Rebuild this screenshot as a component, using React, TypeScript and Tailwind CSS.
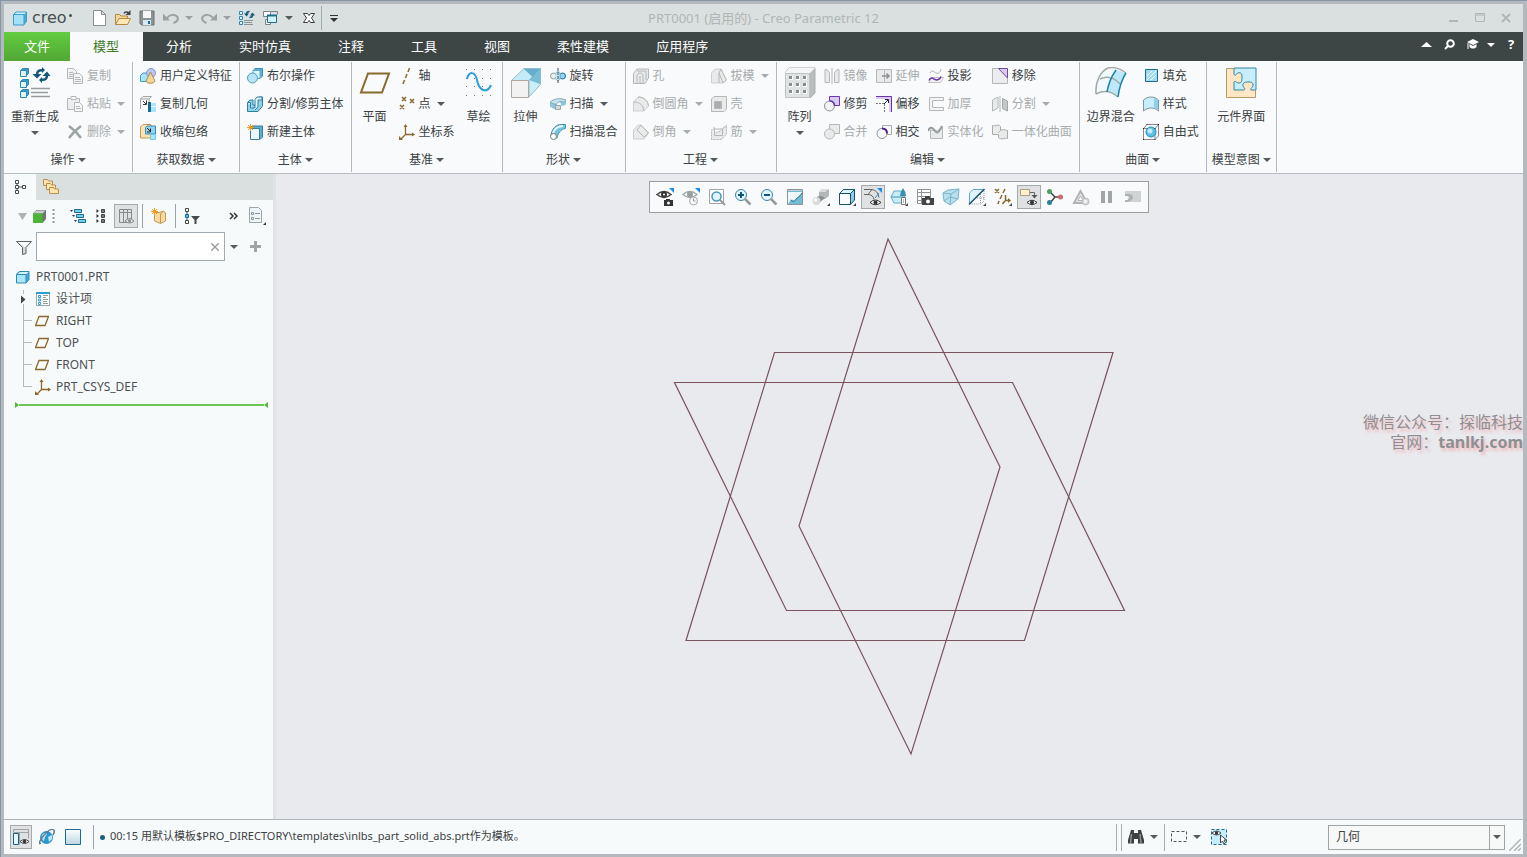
import { ReactNode, useState } from 'react'

type IconProps = { size?: number; className?: string }
type Icon = (props: IconProps) => ReactNode

const icon = (box: number, children: ReactNode): Icon => {
  const Drawn: Icon = ({ size = box, className = '' }) => (
    <svg
      width={size}
      height={size}
      viewBox={`0 0 ${box} ${box}`}
      fill="none"
      aria-hidden="true"
      className={`shrink-0 ${className}`}
    >
      {children}
    </svg>
  )
  return Drawn
}

const Arrow = ({ className = 'text-[#555b5b]' }: { className?: string }) => (
  <svg width="8" height="4" viewBox="0 0 8 4" aria-hidden="true" className={`shrink-0 ${className}`}>
    <path d="M0 0h8L4 4z" fill="currentColor" />
  </svg>
)

const teal = '#1c6c8e'
const sky = '#a8e4fb'
const brown = '#8a6a2c'
const gray = '#b4b8b8'
const pale = '#e9ebeb'
const violet = '#6a35a8'

/* Title bar */
const CubeLogo = icon(16, <>
  <path d="M1.500 4.500 4 2h10.500v9.500l-2.500 3" fill="#4aa8d8" stroke="#3a9cc8" />
  <path d="M2 4.500 4.500 2.500h9.500L12 4.500z" fill="#d4f2fd" />
  <path d="M1.500 4.500h10.500v10.500H1.500z" fill="#a4e0f9" stroke="#3a9cc8" />
</>)
const NewFile = icon(16, <path d="M2.500.500h8l4 4v11h-12zM10.500.500v4h4" fill="#fff" stroke="#8a9090" />)
const OpenFolder = icon(16, <>
  <path d="M.500 14.500V4.500h4l1.500 1.500h6.500v3" fill="#f2d79a" stroke="#b48a3c" />
  <path d="M.500 14.500 4 8.500h11.500l-3 6z" fill="#fde7b4" stroke="#b48a3c" />
  <path d="M9 3.500c1-2 3-2 5-.5" stroke="#444" strokeWidth="1.500" />
  <path d="M15.500 0v5h-5z" fill="#444" />
</>)
const Save = icon(16, <>
  <path d="M1 1h14v14H2.500L1 13.500z" fill="#8b9292" stroke="#6a7272" />
  <path d="M4 1h8v7H4z" fill="#f7f7f7" />
  <path d="M4 10h8v5H4z" fill="#d6e9f2" />
  <path d="M9 11h2v3H9z" fill={teal} />
</>)
const Undo = icon(16, <>
  <path d="M4 8c3-4 8-4 10.500-1 1 3-1 5-4 6" stroke="#9ba2a2" strokeWidth="2" />
  <path d="M0 3.500v7h7z" fill="#9ba2a2" />
</>)
const Redo = icon(16, <>
  <path d="M12 8C9 4 4 4 1.500 7c-1 3 1 5 4 6" stroke="#9ba2a2" strokeWidth="2" />
  <path d="M16 3.500v7H9z" fill="#9ba2a2" />
</>)
const RegenSmall = icon(16, <>
  <path d="M.500 1.500h3v3h-3zM.500 6.500h3v3h-3zM.500 11.500h3v3h-3z" fill="#dff5fe" stroke="#2d89b1" />
  <path d="M5 10.500h9M5 12.500h8M5 14.500h9" stroke="#8b9292" />
  <path d="M10.500 1.500c-2 0-3 1-3 2.500M10.500 7.500c2 0 3-1 3-2.500" stroke="#12577a" strokeWidth="1.500" />
  <path d="M5 3.500h5L7.500 6.500zM11 5.500h5L13.500 2.500z" fill="#12577a" />
</>)
const Windows = icon(16, <>
  <path d="M.500 1.500h7v5h-7zM2.500 9.500h5v5h-5z" fill="#fff" stroke="#7b8383" />
  <path d="M8 1.500h6.500v3" stroke="#7b8383" />
  <path d="M4.500 5.500h9v7h-9z" fill="#d5f1fc" stroke={teal} />
  <path d="M4 5.500h10" stroke={teal} strokeWidth="2" />
</>)
const CloseX = icon(16, <path
  d="M2.500 3.500h4L8 5.500l1.500-2h4L10.500 8l3 4.500h-4L8 10.500l-1.500 2h-4l3-4.500z"
  fill="#fff"
  stroke="#3a4040"
/>)

/* Ribbon, 32px */
const Regenerate = icon(32, <>
  {[1, 12, 22].map((y) => (
    <g key={y}>
      <path d={`M1.500 ${y + 2.5}l2-2h6v5l-2 2z`} fill="#3f9cc6" stroke="#2d89b1" />
      <path d={`M1.500 ${y + 2.5}h6v6h-6z`} fill="#dff5fe" stroke="#2d89b1" />
    </g>
  ))}
  <path d="M12 21.500h19M12 25.500h17M12 29.500h19" stroke="#979d9d" strokeWidth="1.500" />
  <path d="M24 3.500c-4-1-6 1-6 4M22 12.500c4 1 6-1 6-4" stroke="#12577a" strokeWidth="2.500" />
  <path d="M13.500 7h9L18 11.500zM23.500 9h8L28 4.500zM23 0v6l3-3zM23 10v6l-3-3z" fill="#12577a" />
</>)
const Plane = icon(32, <path d="M9 6.500h21l-7 19H2z" stroke={brown} strokeWidth="2" />)
const Sketch = icon(32, <>
  {[2, 11, 19, 28].map((y) => (
    <path key={y} d={`M3 ${y}.5h1M11 ${y}.5h1M19 ${y}.5h1M27 ${y}.5h1`} stroke="#777" />
  ))}
  <path d="M4 12c2-8 8-8 10 1 2 11 10 14 14 5" stroke="#2a9fd8" strokeWidth="2" />
</>)
const Extrude = icon(32, <>
  <path d="M1.500 13.500 14 1.500h16.500L19 13.500z" fill="#c6ebf8" stroke="#8fbccb" />
  <path d="m19 13.500 11.500-12v16L19 30z" fill="#c9effb" stroke="#8fbccb" />
  <path d="M14 2h16v15z" fill="#62aecb" />
  <path d="M19 13 30 2v15z" fill="#78bcd5" />
  <path d="M1.500 13.500h17v17h-17z" fill="#f2f2f2" stroke="#b0a8a0" />
</>)
const Pattern = icon(32, <>
  <path d="M1 6 5 1h26v25l-5 5" fill="#b9bdbd" stroke="#a9adad" />
  <path d="M1 6 5 1h26l-5 5z" fill="#f5f5f5" />
  <path d="M1.500 6.500h24v24h-24z" fill="#dfe2e2" stroke="#c0c4c4" />
  {[9, 16, 23].map((y) => [5, 12, 19].map((x) => (
    <g key={`${x}-${y}`}>
      <path d={`M${x} ${y}h4v4H${x}z`} fill="#fff" />
      <path d={`M${x} ${y}h3v3H${x}z`} fill="#868c8c" />
    </g>
  )))}
</>)
const Boundary = icon(32, <>
  <path d="M1 27C0 14 6 4 13 1q9-2 18 5Q25 15 23 30q-9-9-22-3z" fill="#f2f9fc" />
  <path d="M16 10c5 2 6 3 9 7l-2 13-11-6zM21 3l10 3-6 11-9-7z" fill="#bde9f8" />
  <path d="M1 27C0 14 6 4 13 1q9-2 18 5M1 27q12-6 22 3M5 12q11-5 20 5" stroke="#a3a9a9" strokeWidth="1.500" />
  <path d="M31 6Q25 15 23 30M21 3Q14 13 12 25" stroke="#1c81ab" strokeWidth="1.500" />
</>)
const Puzzle = icon(32, <>
  <path d="M1 1h30v30H1z" fill="#ffe7c4" />
  <path d="M9 1h22v22h-5c-2-1 2-2 2-5s-2-3-5-3-6 1-5 4c1 2 3 3 1 4H9V15c1-2 2 1 5 1s3-3 3-6-1-5-4-4c-2 1-3 4-4 1z" fill="#c6eefd" stroke="#3184a6" />
  <path d="M9 1.500H1.500v29h29V23" stroke="#b59a66" />
</>)

/* Ribbon, 16px */
const Copy = icon(16, <>
  <path d="M.500.500h6l3 3v7h-9z" fill="#f3f4f4" stroke={gray} />
  <path d="M2 4.500h4M2 6.500h4M2 8.500h4" stroke={gray} />
  <path d="M6.500 5.500h6l3 3v7h-9z" fill="#f3f4f4" stroke={gray} />
  <path d="M8 9.500h5M8 11.500h6M8 13.500h6" stroke={gray} />
</>)
const Paste = icon(16, <>
  <path d="M.500 2.500h12v11H.500z" fill="#eceeee" stroke={gray} />
  <path d="M4 .500h5v3H4z" fill="#fff" stroke={gray} />
  <path d="M7.500 6.500h5l3 3v6h-8z" fill="#f7f8f8" stroke={gray} />
  <path d="M9 10.500h4M9 12.500h5" stroke={gray} />
</>)
const Delete = icon(16, <path d="M2 2q7 5 12 12M14 2Q7 7 2 14" stroke="#9da2a2" strokeWidth="2.500" />)
const UserFeature = icon(16, <>
  <path d="M.500 7.500 3 5h7v8.500H.500z" fill={sky} stroke="#3a9cc8" />
  <circle cx="11" cy="5" r="4.500" fill="#bcc7ee" stroke="#8494d0" />
  <path d="m10.500 4 4.500 9c-1 3-8 3-9 0z" fill="#f5d79e" stroke="#b08a46" />
</>)
const CopyGeom = icon(16, <>
  <path d="M.500 13V3L3 .500h8.500L9 3H.500M9 3v3" fill="#f0f1f1" stroke="#a2a7a7" />
  <path d="m3 5 3 3M6.500 4.500V8.500H3" stroke="#333" />
  <path d="M8 6h3v10H8z" fill={teal} />
  <path d="M11 7h5v3h-5zM11 11h5v5h-5z" fill={sky} />
</>)
const Shrinkwrap = icon(16, <>
  <path d="M.500 3 3 .500h8V14H.500z" fill="#fbe3b4" stroke="#c09a52" />
  <path d="M5.500 3.500 7 2h8.500v8H5.500z" fill="#8fd5f2" stroke="#3a8cb0" />
  <path d="m7 4 3.500 3.500M10.500 4.500V8H7" stroke="#222" />
  <path d="M10.500 10.500h5v5h-5z" fill={sky} stroke="#7ac4e0" />
</>)
const BooleanOp = icon(16, <>
  <path d="M6 2.500 8 .500h7.500V8l-2.500 2.500" fill="#60b0d2" stroke="#3a8cb0" />
  <path d="M6 2.500h7v8H6z" fill="#def5fd" stroke="#5aaed0" />
  <circle cx="5.500" cy="10" r="5" fill="#b9e4f4" stroke="#4c9dbd" />
</>)
const SplitBody = icon(16, <>
  <path d="M.500 6.500 3 4h3v5h4V4l2-3h3.500v9L11 15.500H.500z" fill="#8fd1ea" stroke="#2f7f9f" />
  <path d="M.500 6.500h3V12H8V3.500L10 1h5v3h-4v7l-3 3" stroke="#2f7f9f" fill="#e1f5fc" />
</>)
const NewBody = icon(16, <>
  <path d="M3.500 4 5.500 2h10v11L13 15.500" fill="#5aaed2" stroke="#3a7f9c" />
  <path d="M3.500 4.500h9v11h-9z" fill="#eaf8fd" stroke="#3a7f9c" />
  <circle cx="3.500" cy="3.500" r="1.500" fill="#f29a1c" />
  <path d="M3.500 0v7M0 3.500h7M1 1l5 5M6 1 1 6" stroke="#f29a1c" />
</>)
const Axis = icon(16, <path d="M10.500 0 9 4M8 6 6.500 10M5.500 12 4 16" stroke={brown} strokeWidth="1.500" />)
const Point = icon(16, <path d="M3 1l4 4M7 1 3 5M11 3l4 4M15 3l-4 4M1 9l4 4M5 9l-4 4" stroke={brown} strokeWidth="1.500" />)
const Csys = icon(16, <>
  <path d="M6.500 2v8.500h8M6.500 10.500l-5 5" stroke={brown} strokeWidth="1.300" />
  <path d="M6.500 0l-2 3h4zM16 10.500l-3-2v4zM0 16v-4l4 4z" fill={brown} />
</>)
const Revolve = icon(16, <>
  <circle cx="3.500" cy="8" r="3" fill="#e3eef2" stroke="#8f9da2" />
  <circle cx="12.500" cy="8" r="3" fill="#8fd5f2" stroke={teal} />
  <path d="M6 5c1-2 3-2 4 0v6c-1 2-3 2-4 0" fill="#bfe6f4" stroke="#7cb8cf" />
  <path d="M8 0v16" stroke="#445" strokeDasharray="3 1" />
</>)
const Sweep = icon(16, <>
  <path d="M0 6.500C4 2 11 2 16 4v4.500C14 10 12 10 11 9.500V8c0-2-3-2-4-1v6H4l-4-2.500z" fill="#86c8de" />
  <path d="M0 6.500C4 2 11 2 16 4l-2 2c-3-1-6-1-8 2.500z" fill="#c3e4ee" stroke="#8aa7b1" />
  <path d="M5.500 9.500h5v4h-5z" fill="#d3d9db" stroke="#9ba6aa" />
</>)
const SweptBlend = icon(16, <>
  <path d="M1 12C1 5 7 0 11 .500h4.500v4C11 5 8 9 7 14z" fill="#78c3e0" stroke="#3f92b2" />
  <path d="M3 9C5 4 9 2 13 2" stroke="#e8f9ff" strokeWidth="2" />
  <circle cx="3.500" cy="12.500" r="3" fill="#fff" stroke="#777" />
</>)
const Hole = icon(16, <>
  <path d="M.500 5.500 4 1h11.500v9L12 15.500H.500z" fill={pale} stroke={gray} />
  <path d="M4 15V8c0-4 6-4 6 0v7M7 15V8M4 3h9v9" stroke={gray} />
</>)
const Round = icon(16, <>
  <path d="M.500 6 5 1c6 0 10 4 10.500 9L11 15H.500z" fill={pale} stroke="#cdd0d0" />
  <path d="M.500 6c6 0 10 3 10.500 9M5 1c6 0 10 4 10.500 9" stroke={gray} />
</>)
const Chamfer = icon(16, <>
  <path d="M.500 6 5 1h3l7.500 8L11 15H.500z" fill={pale} stroke="#cdd0d0" />
  <path d="M4 6l7 7M4 6l4-5M11 13l4.500-4M8 1l7.500 8" stroke={gray} />
</>)
const Draft = icon(16, <>
  <path d="M.500 5 4 1h6l5 11-3 3H.500z" fill={pale} stroke="#cdd0d0" />
  <path d="M8 5l4 10 3.500-3L10 1 8 5v10" stroke={gray} />
</>)
const Shell = icon(16, <>
  <path d="M.500 3 3 .500h12.500V13L13 15.500H.500z" fill={pale} stroke={gray} />
  <path d="M3.500 5.500h7v7h-7z" fill="#a9adad" stroke={gray} />
</>)
const Rib = icon(16, <>
  <path d="M.500 15.500V6l3-3v6l6-2 6-6v9l-5 5.500z" fill={pale} stroke={gray} strokeDasharray="2 1" />
  <path d="M3.500 11.500h8V5M3.500 11.500V5h8l3-3" stroke={gray} />
</>)
const Mirror = icon(16, <>
  <path d="M1 1.500c3 0 4 2 4.500 4v9H1zM15 1.500c-3 0-4 2-4.500 4v9H15z" fill={pale} stroke={gray} />
  <path d="M8 0v16" stroke={gray} />
</>)
const Trim = icon(16, <>
  <path d="M5.500.500h10v9h-10z" fill="#d8caf4" stroke={violet} />
  <circle cx="5.500" cy="10" r="5" fill="#f2f2f4" stroke="#8d9191" />
  <path d="M5.500 5c3 0 5 2 5 5" stroke={violet} strokeWidth="1.500" />
</>)
const Merge = icon(16, <>
  <path d="M5.500.500h10v9h-10z" fill={pale} stroke={gray} />
  <circle cx="5.500" cy="10" r="5" fill={pale} stroke={gray} />
</>)
const Extend = icon(16, <>
  <path d="M.500 1.500h8v13h-8zM8.500 1.500h7v13h-7z" fill={pale} stroke={gray} />
  <path d="M6 8h7M10.500 5.500 13 8l-2.500 2.500" stroke="#8b9090" strokeWidth="1.500" />
</>)
const Offset = icon(16, <>
  <path d="M0 1.500h14.500V16" stroke="#d8caf4" strokeWidth="3" />
  <path d="M0 .500h15.500V16" stroke={violet} />
  <path d="M0 7.500h8.500V16" stroke="#777" strokeDasharray="2 1" />
  <path d="m8 8 4-4M9 3.500h3.500V7" stroke="#222" />
</>)
const Intersect = icon(16, <>
  <path d="M11 10.500h4.500v-9h-9V4" stroke="#aab" />
  <circle cx="6" cy="9.500" r="5" stroke="#8d9191" />
  <path d="M6 4.500c3 0 5 2 5 5" stroke="#4c2385" strokeWidth="2" />
</>)
const Project = icon(16, <>
  <path d="M2 5c2-4 4-1 6 0s4 0 5-4" stroke="#a9adad" />
  <path d="M4 9.500h11.500l-3 5H.500z" fill="#f3f3f3" stroke="#c0c0c5" />
  <path d="M1 12.500c2-4 4-2 6-1s5 0 6-3" stroke={violet} strokeWidth="1.500" />
</>)
const Thicken = icon(16, <path d="M1.500 1.500h14v3h-11v7h11v3h-14z" fill="#f4f5f5" stroke={gray} />)
const Solidify = icon(16, <>
  <path d="M2.500 6v8.500h12V3L9 7z" fill={pale} stroke={gray} />
  <path d="M0 7c3-7 6-1 8 1s4-2 6-6" stroke="#999e9e" strokeWidth="2" />
</>)
const Remove = icon(16, <>
  <path d="M.500.500h15v15H.500z" fill="#ececee" stroke="#b2b6b6" />
  <path d="M6.500.500h9V10z" fill="#d8caf4" stroke="#6b4aa0" />
</>)
const Split = icon(16, <>
  <path d="M.500 4 6 1v11l-5.500 3z" fill={pale} stroke={gray} />
  <path d="M8 0v16" stroke={gray} />
  <path d="M10.500 2.500 15.500 5v10l-5-2.500z" fill="#c4c8c8" stroke="#a0a5a5" />
</>)
const Quilt = icon(16, <>
  <path d="M.500 10.500v-9c3 1 6-2 8 1v4c3-2 5 0 7 0v8c-3-1-6 2-9-1v-3z" fill={pale} stroke="#a7abab" />
  <path d="M8.500 6.500 6 9" stroke={gray} />
</>)
const Fill = icon(16, <>
  <path d="M2.500 1.500h12v12h-12z" fill="#9edcf2" stroke={teal} />
  <path d="m4 8 5-5M4 12l9-9M8 12l5-5" stroke="#fff" />
</>)
const Style = icon(16, <>
  <path d="M.500 15V4c4-4 11-4 15 0v11c-4-4-11-4-15 0z" fill="#c8eefb" stroke="#7f979f" />
  <path d="M11 2c3 1 4 2 4 3v9l-4-2z" fill="#8fd0e8" />
</>)
const Freestyle = icon(16, <>
  <path d="M.500 4.500 4 .500h11.500V12L12 15.500H.500zM.500 4.500H12v11M12 4.500l3.500-4" stroke="#888" />
  <circle cx="8" cy="8" r="5" fill="#5cc0e6" stroke="#2b8db4" />
  <circle cx="7" cy="7" r="2.500" fill="#c4edfb" />
  <path d="M0 4h1v1H0zM11.500 4h1v1h-1zM3.500 0h1v1h-1zM15 0h1v1h-1zM0 15h1v1H0zM11.500 15h1v1h-1z" fill="#222" />
</>)

/* Model tree */
const TreeTab = icon(16, <path d="M3.500 1.500h3v3h-3zM3.500 6.500h3v3h-3zM3.500 11.500h3v3h-3zM10.500 6.500h3v3h-3zM6.500 8h4M5 4.500v2M5 9.500v2" stroke="#444c4c" />)
const Folders = icon(16, <>
  {[[0, 0], [3, 4], [6, 8]].map(([x, y]) => (
    <path key={x} d={`M${x + 0.5} ${y + 6.5}v-6h4l1 1.500h4v4.500z`} fill="#fde3ae" stroke="#b8914e" />
  ))}
</>)
const GreenCube = icon(16, <>
  <path d="M1 5.500 4.500 2H14v9l-3.500 4z" fill="#6f7777" />
  <path d="M1.500 5.500 4.500 2.500H13.500L10.500 5.500z" fill="#c9cdcd" />
  <path d="M1 5.500h9.500V15H1z" fill="#4db535" />
</>)
const Indent = icon(16, <>
  <path d="M4.500 1.500h7v3h-7zM6.500 6.500h7v3h-7zM8.500 11.500h7v3h-7z" fill="#74ccf0" stroke={teal} />
  <path d="M0 2h3L1.500 4zM2 7h3L3.500 9zM4 12h3l-1.500 2z" fill="#333" />
</>)
const Dots = icon(16, <>
  <path d="M9.500 1.500h3v3h-3zM9.500 6.500h3v3h-3zM9.500 11.500h3v3h-3z" fill="#777" stroke="#444" />
  <path d="M4.500 1v4L7 3zM4.500 6v4L7 8zM4.500 11v4L7 13z" fill="#333" />
</>)
const Columns = icon(16, <>
  <path d="M1.500 1.500h12v13h-12zM1.500 4.500h12M5.500 1.500v13M9.500 1.500v13" stroke="#858a8a" />
  <path d="M7 13q4.500-5 9 0-4.500 4-9 0z" fill="#dfe0e0" stroke="#858a8a" />
  <circle cx="11.500" cy="12.800" r="1.500" fill="#858a8a" />
</>)
const TreeNew = icon(16, <>
  <path d="M3.500 4.500H8L12.500 3l2 2v8l-5 2.500-6-2.500z" fill="#fbd9a0" stroke="#c09a52" />
  <path d="M9.500 6v9.500M9.500 6l3-3" stroke="#c09a52" />
  <path d="M3.500 0v7M0 3.500h7M1 1l5 5M6 1 1 6" stroke="#f29a1c" />
</>)
const TreeFilter = icon(16, <>
  <path d="M1.500.500h3v3h-3zM1.500 12.500h3v3h-3zM3 3.500v9" stroke="#444" />
  <path d="M1.500 6.500h3v3h-3z" fill="#58bfe9" stroke={teal} />
  <path d="M7 8h9l-3.500 4v4h-2v-4z" fill="#444c4c" />
</>)
const TreeDoc = icon(18, <>
  <path d="M1.500.500h9l3 3v12h-12z" fill="#eef4f7" stroke="#9da5a5" />
  <path d="M3.500 5.500h2v2h-2zM3.500 10.500h2v2h-2zM7 6.500h5M7 11.500h5" stroke="#8d9595" />
  <path d="M18 15v3h-3z" fill="#333" />
</>)
const Funnel = icon(16, <>
  <path d="M.500 2.500h15L10 8.500v6l-3.500 1v-7z" fill="#d9dcdc" stroke="#5b6363" />
  <path d="M2 3h12L9 8z" fill="#fff" />
</>)
const PartIcon = icon(14, <>
  <path d="M.500 4 3.500 1.500h9.500v8L10 13" fill="#4aa8d8" stroke="#2d89b1" />
  <path d="M1 4.500 4 2h8.500l-2.500 2.500z" fill="#d4f2fd" />
  <path d="M.500 4.500h9.500v8.500H.500z" fill="#abe5fb" stroke="#2d89b1" />
</>)
const DesignItems = icon(14, <>
  <path d="M.500.500h13v13H.500z" fill="#fff" stroke="#9da5a5" />
  <path d="M0 1h14" stroke="#2a9fd8" strokeWidth="2" />
  <path d="M2.500 3.500h2v2h-2zM2.500 7h2v2h-2zM2.500 10.500h2v2h-2z" stroke="#2a9fd8" />
  <path d="M7 3.500h5M7 5.500h3M7 7.500h5M7 9.500h4M7 11.500h5" stroke="#999" />
</>)
const SmallPlane = icon(14, <path d="M4 2.500h9.500l-3.500 9H.500z" stroke={brown} strokeWidth="1.300" />)

/* Graphics toolbar */
const cornerFlag = <path d="M13 0h5v5z" fill="#1d8cf0" />
const menuMark = <path d="M18 15v3h-3z" fill="#444" />
const Eye = icon(18, <>
  <path d="M1 6.500q7-6 14 0-7 6-14 0z" fill="#fff" stroke="#444" strokeWidth="1.500" />
  <circle cx="8" cy="6.500" r="3" fill="#333" />
  <circle cx="8" cy="6.500" r="1" fill="#fff" />
  <path d="M8 12h9v6H8zM10 11h4v2h-4z" fill="#333" />
  <circle cx="12.500" cy="15" r="1.500" fill="#fff" />
  {cornerFlag}
</>)
const EyeClock = icon(18, <>
  <path d="M1 6.500q7-6 14 0-7 6-14 0z" fill="#fff" stroke="#a5aaaa" strokeWidth="1.500" />
  <circle cx="8" cy="6.500" r="3" fill="#9a9f9f" />
  <circle cx="11.500" cy="13" r="4" fill="#f5f5f5" stroke="#a5aaaa" />
  <path d="M11.500 10.500V13h2" stroke="#9a9f9f" />
  {cornerFlag}
</>)
const Refit = icon(18, <>
  <path d="M1.500 1.500h14v14h-14z" fill="#fff" stroke="#9da5a5" />
  <circle cx="8.500" cy="8.500" r="4.500" fill="#dff4fc" stroke="#4797b6" strokeWidth="1.500" />
  <path d="m12 12 5 5" stroke="#999" strokeWidth="2" />
</>)
const ZoomInIcon = icon(18, <>
  <circle cx="7" cy="7" r="5.500" fill="#e3f6fd" stroke="#3585a6" />
  <path d="M4 7h6M7 4v6" stroke="#12577a" strokeWidth="2" />
  <path d="m11 11 5.500 5.500" stroke="#999" strokeWidth="2.500" />
</>)
const ZoomOutIcon = icon(18, <>
  <circle cx="7" cy="7" r="5.500" fill="#e3f6fd" stroke="#3585a6" />
  <path d="M4 7h6" stroke="#12577a" strokeWidth="2" />
  <path d="m11 11 5.500 5.500" stroke="#999" strokeWidth="2.500" />
</>)
const Repaint = icon(18, <>
  <path d="M1.500 1.500h15v15h-15z" fill="#6fbdd9" stroke="#8d9595" />
  <path d="M2 4h14c-1 4-5 5-8 9l-3-1-3 4z" fill="#eef8fb" />
  <path d="M2 2.500h14" stroke="#c9cdcd" />
  <path d="M16 5c-2 4-6 5-8 8.500L4.500 12" stroke="#2b6f8c" />
</>)
const Render = icon(18, <>
  <path d="M7 4 10 1h7v7l-4 3H7z" fill="#b3b7b7" />
  <path d="M7 4 10 1h7l-4 3z" fill="#dcdede" />
  <path d="M5 9c2-2 6-1 8 1l-6 5z" fill="#8b9090" />
  <circle cx="4.500" cy="13" r="4" fill="#d7d9d9" />
  <circle cx="3.500" cy="12" r="1.800" fill="#fff" />
  {menuMark}
</>)
const Shaded = icon(18, <>
  <path d="M1.500 5.500 5.500 1.500h11v10.500l-4 4.500" fill="#8fcbe2" stroke="#16536e" />
  <path d="M1.500 5.500l4-4h11l-4 4z" fill="#dff4fc" stroke="#16536e" />
  <path d="M1.500 5.500h11v11h-11z" fill="#fff" stroke="#16536e" />
  {menuMark}
</>)
const Datum = icon(18, <>
  <path d="M0 1.500h8q6 1 7 8M0 6.500h4q5 0 6 5M8 1.500 4 6.500" stroke="#666" />
  <path d="m15 5-4 5" stroke="#2b9cc8" />
  <path d="M6 14.500q5.500-5 11 0-5.500 4.500-11 0z" fill="#fff" stroke="#333" />
  <circle cx="11.500" cy="14.500" r="2" fill="#333" />
  {cornerFlag}
</>)
const Saved = icon(18, <>
  <path d="M1 9 4 3h7l4 6-3 6H4z" fill="#c8ecf9" stroke="#62aac4" />
  <path d="M1 9h14" stroke="#4797b6" />
  <path d="M13 0q-3 4-3 8h6q0-4-3-8z" fill="#398fb3" />
  <path d="M11.500 9.500h4v7h-4zM13 12h1M13 14h1" fill="#fff" stroke="#777" />
  {menuMark}
</>)
const ViewManager = icon(18, <>
  <path d="M1.500 1.500h13v14h-13zM1.500 4.500h13M1.500 8.500h13M1.500 12.500h13M5.500 1.500v14" fill="#fff" stroke="#8d9494" />
  <path d="M6 10h12v7H6zM9 8h5v3H9z" fill="#444" />
  <circle cx="12" cy="13.500" r="2" fill="#fff" />
</>)
const Perspective = icon(18, <>
  <path d="M1 5 6 2l11-1-1 10-8 6-6-4z" fill="#b8dfee" stroke="#7cb4ca" />
  <path d="m1 5 8 1 8-5M9 6l-1 11M2 13l6-4 8 2" stroke="#7cb4ca" />
</>)
const Section = icon(18, <>
  <path d="M1.500 16V5L5 1.500h11z" fill="#dff4fc" stroke="#62aac4" />
  <path d="M16 3v10l-3 3H3M12.500 6v10M7 10h9" stroke="#999" strokeDasharray="1 1" />
  <path d="M1 16.500 16.500 1" stroke="#16536e" strokeWidth="1.500" />
  {menuMark}
</>)
const DatumFilter = icon(18, <>
  <path d="m1 1 4 4M5 1 1 5M11 1 9 5M8 7l-2 4M5 13l-1 3M11.500 7v5.500h4M11 13l-2.500 3" stroke={brown} strokeWidth="1.500" />
  <path d="m14 10 3 2.500-3 2.500z" fill={brown} />
  {menuMark}
</>)
const Annotation = icon(18, <>
  <path d="M.500 1.500h9v6h-9z" fill="#fff0cf" stroke="#a79e88" />
  <path d="M10 4.500h4.500V7" stroke="#666" />
  <path d="M11.500 7h6l-3 3.500z" fill="#555" />
  <path d="M7 14.500q5-4.500 10 0-5 4-10 0z" fill="#fff" stroke="#333" />
  <circle cx="12" cy="14.500" r="2" fill="#333" />
</>)
const Spin = icon(18, <>
  <path d="M4 4l5 5-5 6M9 9h6" stroke="#444" strokeWidth="1.500" />
  <circle cx="3.500" cy="3.500" r="2.500" fill="#4f9d5f" />
  <circle cx="14.500" cy="9" r="2.500" fill="#cf6a6a" />
  <circle cx="3.500" cy="14.500" r="2.500" fill="#2b7f9d" />
</>)
const Simulate = icon(18, <>
  <path d="M8.500 3 15 15H2z" fill="#e8e9e9" stroke="#b0b4b4" strokeWidth="2" />
  <path d="M8.500 8 11 12.500H6z" fill="#fff" stroke="#b0b4b4" />
  <circle cx="13.500" cy="13.500" r="3.500" fill="#d6d8d8" stroke="#b8bcbc" />
  <path d="M12.500 11.500v4l3-2z" fill="#fff" />
</>)
const Pause = icon(18, <path d="M3 3h4v12H3zM10 3h4v12h-4z" fill="#a0a5a5" />)
const Flow = icon(18, <>
  <path d="M1 3h16v11H1z" fill="#d0d3d3" />
  <path d="M1 6h4c3 0 4 2 4 3.500S7 13 4 14H1v-2h2c1 0 2-1 2-2.500S4 8 1 8z" fill="#aeb2b2" />
  <path d="M1 8h2c2 0 2 3 0 4H1z" fill="#f8fafc" />
</>)

/* Status bar */
const PanelToggle = icon(18, <>
  <path d="M1.500 1.500h15v3h-15zM7.500 4.500v12M16.500 4.500v6" stroke="#9da3a3" />
  <path d="M1.500 5.500h5v11h-5z" fill="#e5f6fc" stroke="#16638a" />
  <path d="M8 13.500q4.500-4 9 0-4.500 4-9 0z" fill="#fff" stroke="#444" />
  <circle cx="12.500" cy="13.500" r="1.800" fill="#333" />
</>)
const Globe = icon(16, <>
  <circle cx="7.500" cy="8.500" r="6.500" fill="#2f97cf" />
  <path d="M3 6c2-3 4-2 5-1l-2 3-1 4C3 11 2 9 3 6zM9 8l4-2v4l-3 3z" fill="#bce7fa" />
  <path d="M2 14c-4 3 0-6 6-11s9-2 6 3" stroke="#667a88" strokeWidth="1.500" />
</>)
const BlankWindow = icon(16, <>
  <linearGradient id="pane" x1="0" y1="0" x2="0" y2="1">
    <stop stopColor="#fdfefe" />
    <stop offset="1" stopColor="#bcd6e2" />
  </linearGradient>
  <path d="M.500.500h15v15H.500z" fill="url(#pane)" stroke={teal} />
</>)
const Binoculars = icon(16, <>
  <path d="M3 1h3v3h4V1h3l3 10v3.500h-6V10H6v4.500H0V11z" fill="#3c4242" />
  <path d="M3.500 5 2.500 14M12 5l1 9" stroke="#8d9393" strokeWidth="1.500" />
</>)
const SelectBox = icon(16, <path d="M.500 2.500h15v10H.500z" stroke="#555" strokeDasharray="3 2" />)
const PickBox = icon(16, <>
  <path d="M.500.500h15v15H.500z" fill="#c5edfc" stroke={teal} strokeDasharray="3 2" />
  <path d="M1 4q4.500-4 9 0-4.500 4-9 0z" fill="#fff" stroke="#444" />
  <circle cx="5.500" cy="4" r="1.700" fill="#333" />
  <path d="M9.500 6v8l2-2 1.500 3 1.500-1-1.500-3h2.500z" fill="#fff" stroke="#444" />
</>)

type Tool = { icon: Icon; label: string; menu?: boolean; off?: boolean }
type Group = { title: string; cells: (Tool | Tool[])[] }

const groups: Group[] = [
  {
    title: '操作',
    cells: [
      { icon: Regenerate, label: '重新生成', menu: true },
      [
        { icon: Copy, label: '复制', off: true },
        { icon: Paste, label: '粘贴', menu: true, off: true },
        { icon: Delete, label: '删除', menu: true, off: true },
      ],
    ],
  },
  {
    title: '获取数据',
    cells: [
      [
        { icon: UserFeature, label: '用户定义特征' },
        { icon: CopyGeom, label: '复制几何' },
        { icon: Shrinkwrap, label: '收缩包络' },
      ],
    ],
  },
  {
    title: '主体',
    cells: [
      [
        { icon: BooleanOp, label: '布尔操作' },
        { icon: SplitBody, label: '分割/修剪主体' },
        { icon: NewBody, label: '新建主体' },
      ],
    ],
  },
  {
    title: '基准',
    cells: [
      { icon: Plane, label: '平面' },
      [
        { icon: Axis, label: '轴' },
        { icon: Point, label: '点', menu: true },
        { icon: Csys, label: '坐标系' },
      ],
      { icon: Sketch, label: '草绘' },
    ],
  },
  {
    title: '形状',
    cells: [
      { icon: Extrude, label: '拉伸' },
      [
        { icon: Revolve, label: '旋转' },
        { icon: Sweep, label: '扫描', menu: true },
        { icon: SweptBlend, label: '扫描混合' },
      ],
    ],
  },
  {
    title: '工程',
    cells: [
      [
        { icon: Hole, label: '孔', off: true },
        { icon: Round, label: '倒圆角', menu: true, off: true },
        { icon: Chamfer, label: '倒角', menu: true, off: true },
      ],
      [
        { icon: Draft, label: '拔模', menu: true, off: true },
        { icon: Shell, label: '壳', off: true },
        { icon: Rib, label: '筋', menu: true, off: true },
      ],
    ],
  },
  {
    title: '编辑',
    cells: [
      { icon: Pattern, label: '阵列', menu: true },
      [
        { icon: Mirror, label: '镜像', off: true },
        { icon: Trim, label: '修剪' },
        { icon: Merge, label: '合并', off: true },
      ],
      [
        { icon: Extend, label: '延伸', off: true },
        { icon: Offset, label: '偏移' },
        { icon: Intersect, label: '相交' },
      ],
      [
        { icon: Project, label: '投影' },
        { icon: Thicken, label: '加厚', off: true },
        { icon: Solidify, label: '实体化', off: true },
      ],
      [
        { icon: Remove, label: '移除' },
        { icon: Split, label: '分割', menu: true, off: true },
        { icon: Quilt, label: '一体化曲面', off: true },
      ],
    ],
  },
  {
    title: '曲面',
    cells: [
      { icon: Boundary, label: '边界混合' },
      [
        { icon: Fill, label: '填充' },
        { icon: Style, label: '样式' },
        { icon: Freestyle, label: '自由式' },
      ],
    ],
  },
  { title: '模型意图', cells: [{ icon: Puzzle, label: '元件界面' }] },
]

const tabs = ['分析', '实时仿真', '注释', '工具', '视图', '柔性建模', '应用程序']

const viewTools: { icon: Icon; label: string; on?: boolean }[] = [
  { icon: Eye, label: '外观' },
  { icon: EyeClock, label: '历史' },
  { icon: Refit, label: '重新调整' },
  { icon: ZoomInIcon, label: '放大' },
  { icon: ZoomOutIcon, label: '缩小' },
  { icon: Repaint, label: '重画' },
  { icon: Render, label: '渲染选项' },
  { icon: Shaded, label: '显示样式' },
  { icon: Datum, label: '曲线显示', on: true },
  { icon: Saved, label: '已保存方向' },
  { icon: ViewManager, label: '视图管理器' },
  { icon: Perspective, label: '透视图' },
  { icon: Section, label: '截面' },
  { icon: DatumFilter, label: '基准显示过滤器' },
  { icon: Annotation, label: '注释显示', on: true },
  { icon: Spin, label: '旋转中心' },
  { icon: Simulate, label: '模拟' },
  { icon: Pause, label: '暂停' },
  { icon: Flow, label: '流动' },
]

const treeItems: { icon: Icon; label: string; open?: boolean }[] = [
  { icon: DesignItems, label: '设计项', open: true },
  { icon: SmallPlane, label: 'RIGHT' },
  { icon: SmallPlane, label: 'TOP' },
  { icon: SmallPlane, label: 'FRONT' },
  { icon: Csys, label: 'PRT_CSYS_DEF' },
]

const TitleBar = () => (
  <header className="grid h-7 shrink-0 grid-cols-[1fr_auto_1fr] items-center bg-[#dae0df]">
    <div className="flex items-center gap-2 pl-2">
      <div className="mr-[11px] flex items-center gap-1">
        <CubeLogo />
        <span className="flex w-10 items-start font-[family-name:'DejaVu_Sans',sans-serif] text-base leading-4 text-[#474f50]">
          creo
          <span className="mt-1 ml-0.5 size-[3px] shrink-0 rounded-full bg-[#474f50]" />
        </span>
      </div>
      <button aria-label="新建"><NewFile /></button>
      <button aria-label="打开"><OpenFolder /></button>
      <button aria-label="保存"><Save /></button>
      <button aria-label="撤消" className="flex items-center gap-1.5">
        <Undo />
        <Arrow className="text-[#9ba2a2]" />
      </button>
      <button aria-label="重做" className="flex items-center gap-1.5">
        <Redo />
        <Arrow className="text-[#9ba2a2]" />
      </button>
      <button aria-label="重新生成"><RegenSmall /></button>
      <button aria-label="窗口" className="flex items-center gap-1.5">
        <Windows />
        <Arrow />
      </button>
      <button aria-label="关闭窗口"><CloseX /></button>
      <button aria-label="自定义" className="-ml-1 flex h-6 items-center border-l border-[#a4abab] pl-2">
        <svg width="8" height="7" viewBox="0 0 8 7" aria-hidden="true">
          <path d="M0 0h8v1H0zM0 3h8L4 7z" fill="#333" />
        </svg>
      </button>
    </div>
    <h1 className="text-[13px] leading-5 text-[#b0b6b6]">PRT0001 (启用的) - Creo Parametric 12</h1>
    <div className="flex items-center justify-end gap-4 pr-3 text-[#b0b6b6]">
      <button aria-label="最小化">
        <svg width="10" height="10"><path d="M0 7h9v2H0z" fill="currentColor" /></svg>
      </button>
      <button aria-label="最大化">
        <svg width="10" height="10"><path d="M.500.500h9v8h-9zM0 2h10" stroke="currentColor" fill="none" /></svg>
      </button>
      <button aria-label="关闭">
        <svg width="10" height="10"><path d="m1 1 8 8M9 1 1 9" stroke="currentColor" strokeWidth="2" /></svg>
      </button>
    </div>
  </header>
)

const TabBar = () => (
  <nav className="flex h-[29px] shrink-0 items-stretch bg-[#3d4545] text-[13px] text-white">
    <button className="bg-linear-to-b from-[#62cc40] to-[#52a734] px-5">文件</button>
    <button className="bg-[#f8fafc] pr-6 pl-[23px] text-[#3f7d24]">模型</button>
    {tabs.map((tab) => (
      <button key={tab} className="pr-6 pl-[23px]">
        {tab}
      </button>
    ))}
    <div className="mr-2 ml-auto flex items-center gap-3 pb-1">
      <button aria-label="最小化功能区">
        <svg width="11" height="5"><path d="M0 5h11L5.500 0z" fill="#fff" /></svg>
      </button>
      <button aria-label="搜索">
        <svg width="11" height="11" fill="none" stroke="#fff" strokeWidth="2">
          <circle cx="6.500" cy="4.500" r="3.300" />
          <path d="M4 7 1 10" />
        </svg>
      </button>
      <button aria-label="学习" className="flex items-center gap-2">
        <svg width="12" height="11">
          <path d="M6 0 0 3l6 3 6-3zM2.500 5v3c2 2 5 2 7 0V5L6 7z" fill="#fff" />
          <path d="M1 4v6" stroke="#fff" />
        </svg>
        <Arrow className="text-white" />
      </button>
      <button className="w-2 font-bold">?</button>
    </div>
  </nav>
)

const BigButton = ({ icon: Drawing, label, menu }: Tool) => (
  <button className="flex flex-col items-center pt-[5px]">
    <Drawing />
    <span className="mt-2 min-w-8 leading-5">{label}</span>
    {menu && <Arrow className="mt-1 text-[#555b5b]" />}
  </button>
)

const SmallButton = ({ icon: Drawing, label, menu, off }: Tool) => (
  <button
    disabled={off}
    className={`flex h-7 items-center ${off ? 'text-[#a8acac]' : 'text-[#3b4142]'}`}
  >
    <Drawing />
    <span className="ml-1">{label}</span>
    {menu && <Arrow className={off ? 'ml-1.5 text-[#a8acac]' : 'ml-1.5 text-[#555b5b]'} />}
  </button>
)

const Ribbon = () => (
  <div className="flex h-[113px] shrink-0 border-b border-[#b5bdc0] bg-[#f8fafc] text-xs whitespace-nowrap text-[#3b4142]">
    {groups.map(({ title, cells }) => (
      <section key={title} className="my-px flex flex-col border-r border-[#b4b9bb]">
        <div className="flex h-[86px] justify-center gap-2 px-[7px]">
          {cells.map((cell, i) =>
            Array.isArray(cell) ? (
              <div key={i} className="flex flex-col">
                {cell.map((tool) => (
                  <SmallButton key={tool.label} {...tool} />
                ))}
              </div>
            ) : (
              <BigButton key={i} {...cell} />
            )
          )}
        </div>
        <button className="flex h-6 items-center justify-center gap-[3px] px-[5px]">
          {title}
          <Arrow />
        </button>
      </section>
    ))}
  </div>
)

const ModelTree = () => {
  const [query, setQuery] = useState('')
  return (
    <aside className="flex w-[272px] shrink-0 flex-col border-r-3 border-[#dfe3e4] bg-[#f7fafb] text-xs text-[#4b5152]">
      <div className="flex h-[26px] bg-[#dae0df]">
        <button aria-label="模型树" className="flex w-8 items-center justify-center bg-[#f7fafb]">
          <TreeTab />
        </button>
        <button aria-label="文件夹" className="ml-[7px]">
          <Folders />
        </button>
      </div>
      <div className="flex h-8 items-center pr-[7px] pl-[14px]">
        <svg width="9" height="7" aria-hidden="true"><path d="M0 0h9L4.500 7z" fill="#aeb2b2" /></svg>
        <button aria-label="模型" className="ml-[5px]"><GreenCube /></button>
        <svg width="3" height="14" className="ml-1" aria-hidden="true">
          <path d="M1.500 0v14" stroke="#999" strokeWidth="2" strokeDasharray="2 2" />
        </svg>
        <button aria-label="层级" className="ml-[15px]"><Indent /></button>
        <button aria-label="展开" className="ml-1.5"><Dots /></button>
        <button aria-label="树列" className="ml-1.5 flex size-6 items-center justify-center border border-[#a5a9a9] bg-[#dfe1e2]">
          <Columns />
        </button>
        <span className="mx-1 h-6 w-px bg-[#9da3a3]" />
        <button aria-label="新建节点" className="mx-1"><TreeNew /></button>
        <span className="mx-1 h-6 w-px bg-[#9da3a3]" />
        <button aria-label="树过滤器" className="ml-1"><TreeFilter /></button>
        <button aria-label="更多" className="ml-auto">
          <svg width="9" height="8" fill="none" stroke="#333" strokeWidth="1.500"><path d="m1 1 3 3-3 3M5 1l3 3-3 3" /></svg>
        </button>
        <button aria-label="设置" className="ml-2.5"><TreeDoc /></button>
      </div>
      <div className="flex h-[29px] items-center pr-3 pl-3">
        <Funnel />
        <label className="ml-1 flex h-full min-w-0 flex-1 items-center border border-[#9fabb0] bg-white pr-[5px]">
          <input
            aria-label="过滤"
            value={query}
            onChange={(e) => setQuery(e.target.value)}
            className="min-w-0 flex-1 px-1 outline-none"
          />
          <button aria-label="清除" onClick={() => setQuery('')}>
            <svg width="8" height="8"><path d="m0 0 8 8M8 0 0 8" stroke="#999" strokeWidth="1.300" /></svg>
          </button>
        </label>
        <button aria-label="过滤选项" className="ml-[5px]"><Arrow /></button>
        <button aria-label="添加" className="ml-3">
          <svg width="11" height="11"><path d="M5.500 0v11M0 5.500h11" stroke="#a0a5a5" strokeWidth="3" /></svg>
        </button>
      </div>
      <ul className="pt-[5px]">
        <li className="flex h-[22px] items-center gap-1.5 pl-3">
          <PartIcon />
          PRT0001.PRT
        </li>
        {treeItems.map(({ icon: Drawing, label, open }, i) => (
          <li key={label} className="flex h-[22px] items-center pl-[19px]">
            {open ? (
              <svg width="9" height="22" className="mr-1 overflow-visible" aria-hidden="true">
                <path d="M.500 2v4M.500 16v6" stroke="#b5babb" />
                <path d="M-2 7.500v8L2.500 11.500z" fill="#444" />
              </svg>
            ) : (
              <span className="mr-[3px] flex h-full w-[9px] flex-col">
                <span className="h-1/2 border-b border-l border-[#b5babb]" />
                {i < treeItems.length - 1 && <span className="h-1/2 border-l border-[#b5babb]" />}
              </span>
            )}
            <span className={open ? 'w-5' : 'w-[21px]'}>
              <Drawing />
            </span>
            {label}
          </li>
        ))}
      </ul>
      <div className="mr-[5px] ml-[11px] flex h-[14px] items-center text-[#55b83a]">
        <svg width="4" height="6" aria-hidden="true"><path d="M0 0v6l4-3z" fill="currentColor" /></svg>
        <span className="h-0.5 flex-1 bg-[#6cc653]" />
        <svg width="4" height="6" aria-hidden="true"><path d="M4 0v6L0 3z" fill="currentColor" /></svg>
      </div>
    </aside>
  )
}

const Canvas = () => (
  <main className="relative flex min-w-0 flex-1 overflow-hidden bg-[#e8eaee]">
    <svg viewBox="276 174 1247 645" className="h-full w-full" fill="none" stroke="#79525c" strokeWidth="1.200">
      <path d="M888 239 1000 467 911 754 799 526z" />
      <path d="M774.500 352.500h338.500L1024.500 640.500H686z" />
      <path d="M674.500 382.500h338L1124.500 610.500H786.500z" />
    </svg>
    <div
      role="toolbar"
      className="absolute top-[7px] left-[373px] flex h-8 items-center border border-[#9a9e9f] bg-[#f8fafc] px-0.5"
    >
      {viewTools.map(({ icon: Drawing, label, on }) => (
        <button
          key={label}
          aria-label={label}
          className={`mx-px flex size-6 items-center justify-center border ${
            on ? 'border-[#a5a9a9] bg-[#dfe1e2]' : 'border-transparent'
          }`}
        >
          <Drawing />
        </button>
      ))}
    </div>
    <div className="absolute top-[238px] right-0 text-right text-base leading-5 text-[#8f8f92] [text-shadow:2px_3px_3px_#f3b9bd]">
      <p>微信公众号：探临科技</p>
      <p>
        官网：<b>tanlkj.com</b>
      </p>
    </div>
  </main>
)

const StatusBar = () => (
  <footer className="flex h-[35px] shrink-0 items-center border-t border-[#a9b3b8] bg-[#f7fafb] pr-0.5 pl-1.5 text-xs text-[#3b4142]">
    <button aria-label="导航器" className="flex h-6 w-[22px] items-center justify-center border border-[#a5a9a9] bg-[#dfe1e2]">
      <PanelToggle />
    </button>
    <button aria-label="浏览器" className="ml-[7px]"><Globe /></button>
    <button aria-label="全屏" className="ml-2.5"><BlankWindow /></button>
    <span className="ml-3 h-6 w-px bg-[#9da3a3]" />
    <span className="ml-1.5 size-[5px] rounded-full bg-[#1c5f80]" />
    <p className="ml-[5px] pb-0.5 text-[11px] whitespace-nowrap">
      00:15 用默认模板$PRO_DIRECTORY\templates\inlbs_part_solid_abs.prt作为模板。
    </p>
    <div className="ml-auto flex items-center">
      <span className="h-[27px] w-1.5 border-x border-[#a9adad]" />
      <button aria-label="查找" className="ml-1.5 flex items-center gap-1.5">
        <Binoculars />
        <Arrow />
      </button>
      <span className="ml-1.5 h-[27px] w-px bg-[#a9adad]" />
      <button aria-label="选择" className="ml-1.5 flex items-center gap-1.5">
        <SelectBox />
        <Arrow />
      </button>
      <button aria-label="预选" className="ml-2.5"><PickBox /></button>
      <div className="relative ml-[101px] flex h-[25px] w-[177px] items-center border border-[#9fa4a4] bg-[#f7f8f8]">
        <select aria-label="选择过滤器" className="h-full w-full appearance-none pl-[7px] outline-none">
          <option>几何</option>
        </select>
        <span className="pointer-events-none absolute inset-y-0 right-0 flex w-[15px] items-center justify-center border-l border-[#9fa4a4]">
          <Arrow />
        </span>
      </div>
      <svg width="12" height="12" className="ml-1 self-end" stroke="#b0b5b7" strokeWidth="1.500" aria-hidden="true">
        <path d="M0 12 12 0M5 12l7-7M9 12l3-3" />
      </svg>
    </div>
  </footer>
)

const App = () => (
  <div className="flex h-screen flex-col overflow-hidden border-t border-l border-[#8296a8] font-['Noto_Sans','Noto_Sans_CJK_SC',sans-serif]">
    <div className="flex min-h-0 flex-1 flex-col border-3 border-r-4 border-[#b4b9bd]">
      <TitleBar />
      <TabBar />
      <Ribbon />
      <div className="flex min-h-0 flex-1">
        <ModelTree />
        <Canvas />
      </div>
      <StatusBar />
    </div>
  </div>
)

export default App
